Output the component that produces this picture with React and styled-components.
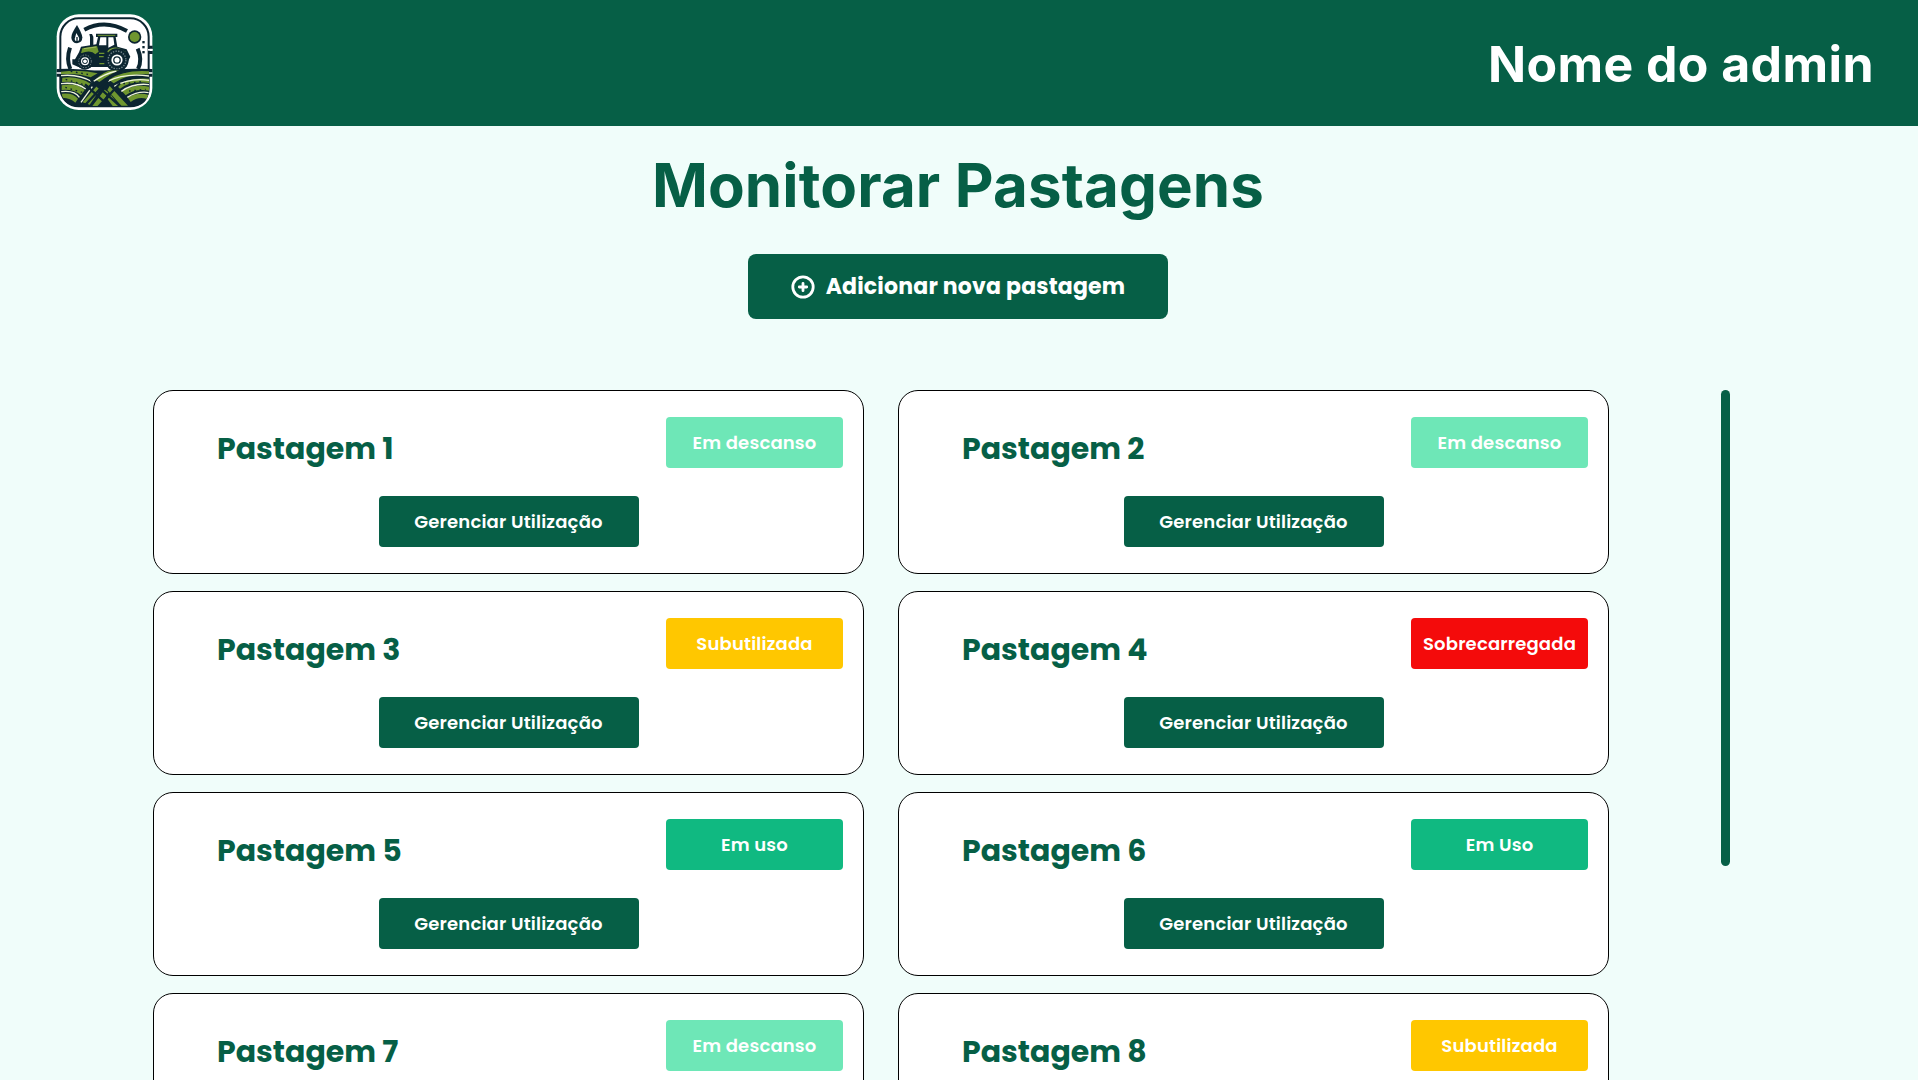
import React from "react";
import styled, { createGlobalStyle } from "styled-components";

const GlobalStyle = createGlobalStyle`
  * { box-sizing: border-box; }
  body { margin: 0; background: #f0fdfa; font-family: Inter, "Liberation Sans", sans-serif; }
`;

const rounded = `
  font-family: Poppins, Inter, "Liberation Sans", sans-serif;
`;

const Page = styled.div`
  height: 1080px;
  overflow: hidden;
  display: flex;
  flex-direction: column;
  background: #f0fdfa;
`;

const Header = styled.header`
  height: 126px;
  flex: none;
  display: flex;
  align-items: flex-start;
  justify-content: space-between;
  padding: 5px 44px 0 45px;
  background: #065f46;
`;

const Logo = styled.svg`
  width: 120px;
  height: 115px;
  display: block;
`;

const AdminName = styled.span`
  margin-top: 29px;
  font-size: 50px;
  line-height: 61px;
  font-weight: 700;
  letter-spacing: 0.4px;
  color: #fff;
  white-space: nowrap;
`;

const Main = styled.main`
  display: flex;
  flex-direction: column;
  align-items: center;
  padding: 23px 2px 0 0;
`;

const Title = styled.h1`
  margin: 0;
  font-size: 60px;
  line-height: 73px;
  font-weight: 700;
  letter-spacing: 0.12px;
  color: #065f46;
`;

const AddButton = styled.button`
  ${rounded}
  width: 420px;
  height: 65px;
  margin: 32px 0 71px;
  padding: 0;
  border: 0;
  border-radius: 8px;
  display: flex;
  align-items: center;
  justify-content: center;
  gap: 11px;
  background: #065f46;
  color: #fff;
  font-size: 22px;
  font-weight: 700;
  letter-spacing: 0.19px;
  svg { width: 24px; height: 24px; }
`;

const Board = styled.section`
  align-self: stretch;
  display: flex;
  align-items: flex-start;
  gap: 112px;
  padding-left: 153px;
`;

const Grid = styled.div`
  display: grid;
  grid-template-columns: repeat(2, 711px);
  gap: 17px 34px;
`;

const Card = styled.article`
  height: 184px;
  padding: 26px 20px;
  border: 1px solid #000;
  border-radius: 20px;
  background: #fff;
  display: flex;
  flex-direction: column;
  align-items: center;
  justify-content: space-between;
`;

const CardTop = styled.div`
  align-self: stretch;
  display: flex;
  justify-content: space-between;
  align-items: flex-start;
  padding-left: 43px;
`;

const CardName = styled.h2`
  ${rounded}
  margin: 9px 0 -4px;
  font-size: 30px;
  line-height: 46px;
  font-weight: 700;
  color: #065f46;
  white-space: nowrap;
`;

const Status = styled.span`
  ${rounded}
  width: 177px;
  height: 51px;
  border-radius: 4px;
  display: flex;
  align-items: center;
  justify-content: center;
  background: ${(p) => p.$color};
  color: #fff;
  font-size: 18px;
  font-weight: 600;
  letter-spacing: 0.18px;
  white-space: nowrap;
`;

const ManageButton = styled.button`
  ${rounded}
  width: 260px;
  height: 51px;
  padding: 0;
  border: 0;
  border-radius: 4px;
  background: #065f46;
  color: #fff;
  font-size: 18px;
  font-weight: 600;
  letter-spacing: 0.18px;
`;

const ScrollThumb = styled.div`
  width: 9px;
  height: 476px;
  border-radius: 5px;
  background: #065f46;
`;

const statuses = {
  rest: "#6ee7b7",
  under: "#ffc700",
  over: "#f40b0b",
  use: "#10b981",
};

const pastures = [
  ["Pastagem 1", "Em descanso", "rest"],
  ["Pastagem 2", "Em descanso", "rest"],
  ["Pastagem 3", "Subutilizada", "under"],
  ["Pastagem 4", "Sobrecarregada", "over"],
  ["Pastagem 5", "Em uso", "use"],
  ["Pastagem 6", "Em Uso", "use"],
  ["Pastagem 7", "Em descanso", "rest"],
  ["Pastagem 8", "Subutilizada", "under"],
];

function Wheel({ cx, cy, r }) {
  return (
    <g>
      <circle cx={cx} cy={cy} r={r} fill="#0c2530" />
      <circle cx={cx} cy={cy} r={r * 0.76} fill="none" stroke="#75868b" strokeWidth={r * 0.12} strokeDasharray="4 4" />
      <circle cx={cx} cy={cy} r={r * 0.48} fill="#fff" />
      <circle cx={cx} cy={cy} r={r * 0.33} fill="#0c2530" />
      <circle cx={cx} cy={cy} r={r * 0.22} fill="#fff" />
    </g>
  );
}

function FarmLogo() {
  return (
    <Logo viewBox="0 0 360 345" aria-label="Logo">
      <defs>
        <clipPath id="field"><path d="M48 196H312V255Q308 304 262 304H100Q52 303 48 255Z" /></clipPath>
      </defs>
      <rect x="35" y="28" width="287" height="287" rx="66" fill="#fff" />
      <rect x="46" y="40" width="265" height="264" rx="55" fill="#fff" stroke="#0c2530" strokeWidth="6" />
      <g fill="none" stroke="#0c2530" strokeWidth="12">
        <path d="M118 74Q180 41 246 78" />
        <path d="M76 192Q63 163 75 128" />
        <path d="M278 131Q293 165 279 192" />
      </g>
      <path d="M96 60Q78 87 79 98Q81 114 96 115Q112 113 112 97Q111 85 96 60Z" fill="#0c2530" />
      <path d="M94 84L89 102Q90 109 94 108V96H98V108Q104 107 102 98Z" fill="#fff" />
      <circle cx="269" cy="96" r="20" fill="#0c2530" />
      <circle cx="269" cy="96" r="15" fill="#6f962f" />
      <g fill="#0c2530">
        <rect x="292" y="108" width="7" height="7" /><rect x="292" y="123" width="7" height="7" /><rect x="292" y="138" width="7" height="7" />
        <path d="M309 122H323V131H309ZM309 138H323V147H309Z" />
      </g>
      <path d="M309 132H323V137H309Z" fill="#fff" />
      <path d="M133 87H141L145 95V125H135V96Z" fill="#0c2530" />
      <path d="M153 86H217V96H212L217 125L245 133L256 155L240 186H100L82 178V163H90L102 142L108 125L154 118L159 96H153Z" fill="#0c2530" />
      <path d="M166 97H184V121H162ZM190 97H205L208 119L190 128Z" fill="#fff" />
      <path d="M112 130L156 123L161 140L151 148Q138 133 108 145Z" fill="#6f962f" />
      <path d="M117 131L153 126" stroke="#a5bd62" strokeWidth="3" />
      <path d="M158 91H211" stroke="#6f962f" strokeWidth="3" />
      <path d="M187 139Q200 124 222 129L244 142Q212 129 192 149Z" fill="#7fa53a" />
      <path d="M162 145H178M162 155H176M163 176H178" stroke="#6f962f" strokeWidth="4" />
      <Wheel cx={120} cy={169} r={25} />
      <Wheel cx={216} cy={165} r={35} />
      <path d="M35 192Q100 188 164 200Q220 188 322 192V215H35Z" fill="#0c2530" />
      <path d="M35 204H48M311 204H322" stroke="#fff" strokeWidth="5" />
      <g clipPath="url(#field)">
        <rect x="46" y="190" width="267" height="116" fill="#0c2530" />
        <g fill="#6f962f">
          <path d="M48 200Q110 192 158 205L137 217Q96 203 48 208Z" />
          <path d="M52 218Q99 211 137 236L126 247Q93 226 51 231Z" />
          <path d="M50 241Q94 233 119 255L108 270Q86 252 50 255Z" />
          <path d="M50 266Q84 262 99 281L91 293Q78 280 52 278Z" />
          <path d="M151 224Q184 190 226 194Q198 205 163 231Z" />
          <path d="M192 224Q236 194 312 199V208Q246 205 206 235Z" />
          <path d="M214 241Q254 216 312 221V234Q259 226 225 251Z" />
          <path d="M231 259Q267 236 312 245V257Q270 250 242 271Z" />
          <path d="M248 278Q278 260 311 270L306 282Q280 273 257 291Z" />
          <path d="M155 244L168 250L134 299L113 292ZM179 254L190 262L166 303H142ZM194 243L249 302H229L187 255Z" />
          <path d="M198 270L222 303H203L188 283Z" />
        </g>
        <g fill="none" stroke="#eff4dc" strokeWidth="4">
          <path d="M48 212Q100 206 143 231Q179 206 214 198" />
          <path d="M48 236Q94 230 122 252" />
          <path d="M48 260Q89 255 103 277" />
          <path d="M188 229Q238 204 312 213" />
          <path d="M208 244Q254 218 312 226" />
          <path d="M229 259Q266 233 312 239" />
          <path d="M247 277Q280 257 312 263" />
          <path d="M108 292L142 245" />
        </g>
        <path d="M137 225L249 325M190 224L98 325M225 235L142 325M120 238L216 325" stroke="#0c2530" strokeWidth="7" />
        <path d="M62 223L128 243M61 247L112 262M235 236L298 229M252 258L302 253M77 199L139 210M192 213L242 201" stroke="#0c2530" strokeWidth="4" strokeDasharray="5 11" />
      </g>
    </Logo>
  );
}

export default function App() {
  return (
    <Page>
      <GlobalStyle />
      <Header>
        <FarmLogo />
        <AdminName>Nome do admin</AdminName>
      </Header>
      <Main>
        <Title>Monitorar Pastagens</Title>
        <AddButton>
          <svg viewBox="0 0 24 24" fill="none" stroke="currentColor" strokeWidth="2.8" strokeLinecap="round">
            <circle cx="12" cy="12" r="10.2" />
            <path d="M12 8.3V15.7M8.3 12H15.7" />
          </svg>
          <span>Adicionar nova pastagem</span>
        </AddButton>
        <Board>
          <Grid>
            {pastures.map(([name, label, kind]) => (
              <Card key={name}>
                <CardTop>
                  <CardName>{name}</CardName>
                  <Status $color={statuses[kind]}>{label}</Status>
                </CardTop>
                <ManageButton>Gerenciar Utilização</ManageButton>
              </Card>
            ))}
          </Grid>
          <ScrollThumb />
        </Board>
      </Main>
    </Page>
  );
}
